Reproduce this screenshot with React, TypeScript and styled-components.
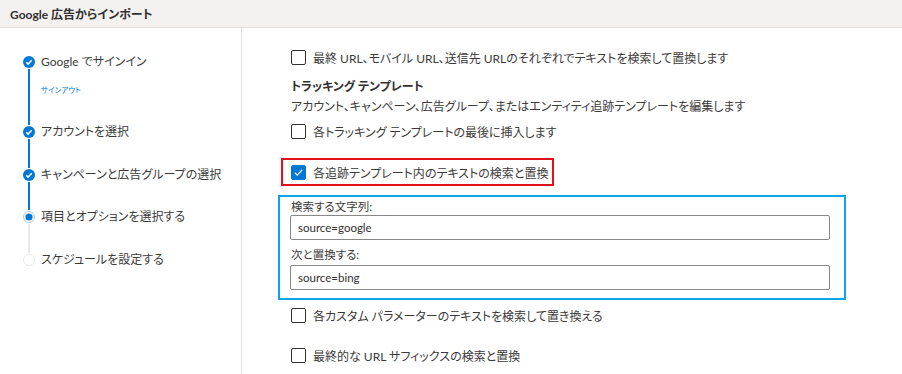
import { createGlobalStyle, styled } from "styled-components";

const GlobalStyle = createGlobalStyle`
    html, body {
        margin: 0;
        padding: 0;
        background: #ffffff;
    }
    body {
        font-family: Lato, "Noto Sans CJK JP", sans-serif;
        font-feature-settings: "palt";
        color: #3b3a39;
        font-size: 12px;
    }
    * {
        box-sizing: border-box;
    }
`;

const Page = styled.div`
    display: flex;
    flex-direction: column;
    height: 100vh;
    overflow: hidden;
`;
const Header = styled.div`
    height: 28px;
    flex-shrink: 0;
    background: #f3f2f1;
    border-bottom: 1px solid #e1dfdd;
    display: flex;
    align-items: center;
    padding-left: 10px;
    font-size: 12px;
    font-weight: 700;
    color: #323130;
`;
const Body = styled.div`
    display: flex;
    flex: 1;
    min-height: 0;
`;
const Sidebar = styled.div`
    width: 242px;
    flex-shrink: 0;
    border-right: 1px solid #e1dfdd;
    padding: 27px 0 0 23px;
    display: flex;
    flex-direction: column;
`;
const Step = styled.div<{ $height: number }>`
    display: flex;
    height: ${(p) => p.$height}px;
`;
const Indicator = styled.div`
    width: 12px;
    display: flex;
    flex-direction: column;
    align-items: center;
`;
const IconBox = styled.div`
    height: 14px;
    display: flex;
    align-items: center;
`;
const Line = styled.div<{ $done: boolean }>`
    flex: 1;
    width: 2px;
    background: ${(p) => (p.$done ? "#0078d4" : "#e8e8e8")};
`;
const StepText = styled.div`
    margin-left: 6px;
    display: flex;
    flex-direction: column;
`;
const StepLabel = styled.div`
    line-height: 14px;
    font-size: 12px;
    white-space: nowrap;
`;
const SignOut = styled.a`
    margin-top: 17px;
    font-size: 7.5px;
    line-height: 10px;
    color: #0078d4;
    cursor: pointer;
`;
const Main = styled.div`
    flex: 1;
    padding: 19px 0 0 49px;
    display: flex;
    flex-direction: column;
    align-items: flex-start;
`;
const CheckRow = styled.label<{ $top?: number }>`
    display: flex;
    align-items: center;
    height: 20px;
    gap: 7px;
    margin-top: ${(p) => p.$top ?? 0}px;
    white-space: nowrap;
    cursor: pointer;
`;
const Box = styled.span<{ $checked?: boolean }>`
    width: 15px;
    height: 15px;
    border-radius: 2px;
    border: 1px solid ${(p) => (p.$checked ? "#0078d4" : "#323130")};
    background: ${(p) => (p.$checked ? "#0078d4" : "#fff")};
    display: flex;
    align-items: center;
    justify-content: center;
    flex-shrink: 0;
`;
const Heading = styled.div`
    margin-top: 11px;
    line-height: 18px;
    font-weight: 700;
    color: #323130;
    white-space: nowrap;
`;
const Desc = styled.div`
    margin-top: 2px;
    line-height: 18px;
    white-space: nowrap;
`;
const Highlight = styled.div`
    margin: 17px 0 0 -10px;
    border: 2px solid #e3101c;
    padding: 2px 4px 2px 8px;
`;
const ReplaceBox = styled.div`
    margin: 9px 0 0 -13px;
    width: 568px;
    border: 2px solid #0ea2e8;
    padding: 2px 14px 8px 10px;
    display: flex;
    flex-direction: column;
`;
const FieldLabel = styled.div<{ $top?: number }>`
    margin-top: ${(p) => p.$top ?? 0}px;
    padding-left: 1px;
    line-height: 16px;
    font-size: 11.5px;
`;
const Input = styled.input<{ $top?: number }>`
    margin-top: ${(p) => p.$top ?? 0}px;
    height: 25px;
    width: 100%;
    border: 1px solid #8a8886;
    border-radius: 2px;
    padding: 0 7px;
    font-family: Lato, "Noto Sans CJK JP", sans-serif;
    font-size: 11.5px;
    color: #323130;
    outline: none;
`;

function Check({ checked }: { checked?: boolean }) {
    return (
        <Box $checked={checked}>
            {checked && (
                <svg width="11" height="11" viewBox="0 0 12 12">
                    <path d="M2 6.3 4.7 9 10 3" fill="none" stroke="#fff" strokeWidth="1.3" />
                </svg>
            )}
        </Box>
    );
}

function StepIcon({ state }: { state: "done" | "current" | "todo" }) {
    if (state === "done") {
        return (
            <svg width="12" height="12" viewBox="0 0 12 12">
                <circle cx="6" cy="6" r="6" fill="#0078d4" />
                <path d="M3.3 6.2 5.1 8 8.7 4.3" fill="none" stroke="#fff" strokeWidth="1.6" />
            </svg>
        );
    }
    if (state === "current") {
        return (
            <svg width="12" height="12" viewBox="0 0 12 12">
                <circle cx="6" cy="6" r="5.5" fill="#fff" stroke="#a6cdef" strokeWidth="1" />
                <circle cx="6" cy="6" r="3.6" fill="#0078d4" />
            </svg>
        );
    }
    return (
        <svg width="12" height="12" viewBox="0 0 12 12">
            <circle cx="6" cy="6" r="5.5" fill="#fff" stroke="#e8e8e8" strokeWidth="1" />
        </svg>
    );
}

const steps: { label: string; state: "done" | "current" | "todo"; height: number; signOut?: boolean }[] = [
    { label: "Google でサインイン", state: "done", height: 70, signOut: true },
    { label: "アカウントを選択", state: "done", height: 43 },
    { label: "キャンペーンと広告グループの選択", state: "done", height: 42 },
    { label: "項目とオプションを選択する", state: "current", height: 43 },
    { label: "スケジュールを設定する", state: "todo", height: 43 },
];

export default function App() {
    return (
        <Page>
            <GlobalStyle />
            <Header>Google 広告からインポート</Header>
            <Body>
                <Sidebar>
                    {steps.map((s, i) => (
                        <Step key={s.label} $height={s.height}>
                            <Indicator>
                                <IconBox>
                                    <StepIcon state={s.state} />
                                </IconBox>
                                {i < steps.length - 1 && <Line $done={s.state === "done"} />}
                            </Indicator>
                            <StepText>
                                <StepLabel>{s.label}</StepLabel>
                                {s.signOut && <SignOut>サインアウト</SignOut>}
                            </StepText>
                        </Step>
                    ))}
                </Sidebar>
                <Main>
                    <CheckRow>
                        <Check />
                        最終 URL、モバイル URL、送信先 URLのそれぞれでテキストを検索して置換します
                    </CheckRow>
                    <Heading>トラッキング テンプレート</Heading>
                    <Desc>アカウント、キャンペーン、広告グループ、またはエンティティ追跡テンプレートを編集します</Desc>
                    <CheckRow $top={5}>
                        <Check />
                        各トラッキング テンプレートの最後に挿入します
                    </CheckRow>
                    <Highlight>
                        <CheckRow>
                            <Check checked />
                            各追跡テンプレート内のテキストの検索と置換
                        </CheckRow>
                    </Highlight>
                    <ReplaceBox>
                        <FieldLabel>検索する文字列:</FieldLabel>
                        <Input defaultValue="source=google" />
                        <FieldLabel $top={7}>次と置換する:</FieldLabel>
                        <Input defaultValue="source=bing" $top={2} />
                    </ReplaceBox>
                    <CheckRow $top={5}>
                        <Check />
                        各カスタム パラメーターのテキストを検索して置き換える
                    </CheckRow>
                    <CheckRow $top={20}>
                        <Check />
                        最終的な URL サフィックスの検索と置換
                    </CheckRow>
                </Main>
            </Body>
        </Page>
    );
}
